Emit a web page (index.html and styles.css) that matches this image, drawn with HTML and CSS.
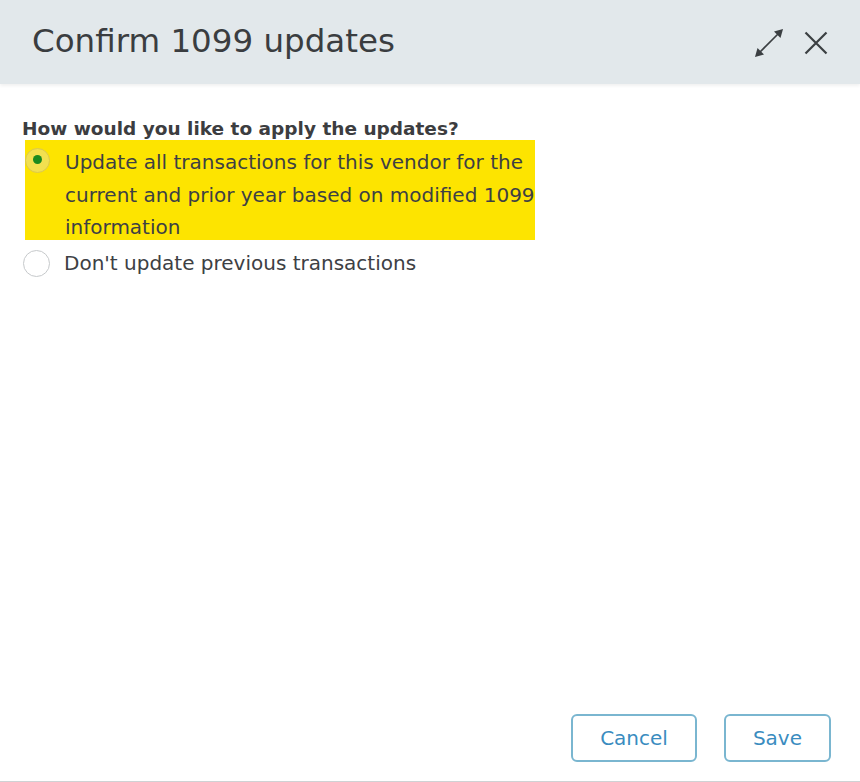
FILE: index.html
```html
<!DOCTYPE html>
<html lang="en">
<head>
    <meta charset="UTF-8">
    <meta name="viewport" content="width=device-width, initial-scale=1.0">
    <link rel="stylesheet" href="styles.css">
</head>
<body>
    <div class="dialog">
        <div class="dialog-header">
            <h1>Confirm 1099 updates</h1>
            <div class="header-icons">
                <svg class="icon-expand" width="34" height="34" viewBox="0 0 34 34">
                    <path d="M7 27 L27 7" stroke="#3b3f42" stroke-width="1.6" fill="none"/>
                    <polygon points="31,3 22,5.5 28.5,12" fill="#3b3f42"/>
                    <polygon points="3,31 5.5,22 12,28.5" fill="#3b3f42"/>
                </svg>
                <svg class="icon-close" width="24" height="24" viewBox="0 0 24 24">
                    <path d="M1.5 1.5 L22.5 22.5 M22.5 1.5 L1.5 22.5" stroke="#3b3f42" stroke-width="2.2" fill="none"/>
                </svg>
            </div>
        </div>
        <div class="dialog-body">
            <p class="question">How would you like to apply the updates?</p>
            <label class="option highlighted">
                <span class="radio checked"></span>
                <span class="option-text">Update all transactions for this vendor for the current and prior year based on modified 1099 information</span>
            </label>
            <label class="option">
                <span class="radio"></span>
                <span class="option-text">Don't update previous transactions</span>
            </label>
        </div>
        <div class="dialog-footer">
            <button class="btn">Cancel</button>
            <button class="btn">Save</button>
        </div>
    </div>
</body>
</html>
```
FILE: styles.css
```css
body {
    font-family: "DejaVu Sans", "Liberation Sans", sans-serif;
    margin: 0;
    padding: 0;
    background-color: white;
}

.dialog {
    width: 860px;
    height: 781px;
    display: flex;
    flex-direction: column;
    border-bottom: 1px solid #cfd2d4;
}

.dialog-header {
    height: 84px;
    background-color: #e2e8eb;
    display: flex;
    align-items: center;
    justify-content: space-between;
    padding: 0 32px 0 32px;
    box-shadow: 0 2px 3px rgba(0, 0, 0, 0.06);
}

.dialog-header h1 {
    margin: 0;
    font-size: 32.5px;
    font-weight: normal;
    color: #3a3d40;
    padding-bottom: 2px;
}

.header-icons {
    display: flex;
    align-items: center;
    gap: 18px;
}

.icon-expand {
    margin-top: 2px;
}

.icon-close {
    margin-top: 1px;
}

.dialog-body {
    flex: 1;
    padding: 34px 20px 0 22px;
}

.question {
    margin: 0 0 1px 0;
    font-size: 18.5px;
    font-weight: bold;
    color: #3c3d40;
}

.option {
    display: flex;
    align-items: flex-start;
    width: 510px;
    font-size: 20px;
    line-height: 32.5px;
    color: #3d4044;
}

.option.highlighted {
    background-color: #fde400;
    margin-left: 3px;
    padding-top: 6px;
    height: 100px;
    box-sizing: border-box;
}

.option-text {
    padding-left: 15px;
    width: 472px;
}

.radio {
    width: 25px;
    height: 25px;
    border: 1px solid #c6c9cb;
    border-radius: 50%;
    background: white;
    margin-top: 2px;
    box-sizing: border-box;
    flex-shrink: 0;
    position: relative;
}

.option:not(.highlighted) {
    margin-top: 7px;
}

.option:not(.highlighted) .radio {
    width: 27px;
    height: 27px;
    margin-top: 3px;
    margin-left: 1px;
}

.option:not(.highlighted) .option-text {
    padding-left: 14px;
}

.radio.checked {
    background: #f2e050;
    border-color: #dcc94a;
}

.radio.checked::after {
    content: "";
    position: absolute;
    width: 9px;
    height: 9px;
    border-radius: 50%;
    background: #1a8a1e;
    left: 7px;
    top: 6px;
}

.dialog-footer {
    display: flex;
    justify-content: flex-end;
    gap: 27px;
    padding: 0 29px 19px 0;
}

.btn {
    font-family: "DejaVu Sans", "Liberation Sans", sans-serif;
    height: 48px;
    padding: 0 27px;
    font-size: 20px;
    color: #3a8cbf;
    background: white;
    border: 2px solid #7ab6d0;
    border-radius: 6px;
}
```
